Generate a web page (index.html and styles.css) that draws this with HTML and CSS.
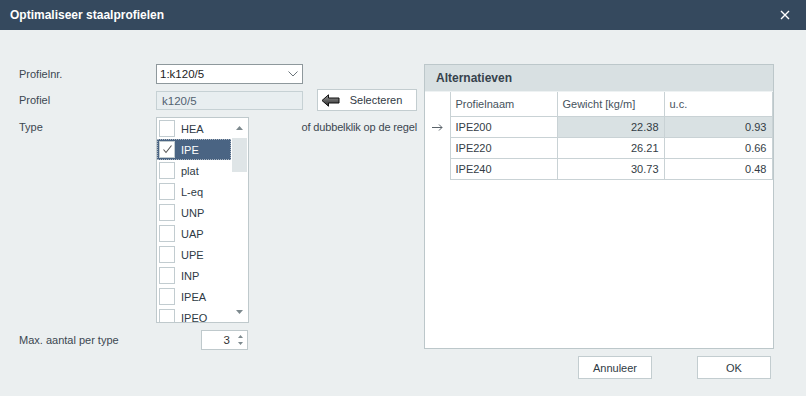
FILE: index.html
```html
<!DOCTYPE html>
<html>
<head>
<meta charset="utf-8">
<link rel="stylesheet" href="styles.css">
</head>
<body>
<div class="titlebar">
  <span class="title">Optimaliseer staalprofielen</span>
  <svg class="close" width="10" height="10" viewBox="0 0 10 10"><path d="M1 1 L9 9 M9 1 L1 9" stroke="#fff" stroke-width="1.4" fill="none"/></svg>
</div>
<div class="content">
  <div class="form">
    <div class="label">Profielnr.</div>
    <div class="combo"><span>1:k120/5</span>
      <svg width="10" height="6" viewBox="0 0 10 6"><path d="M0.5 0.5 L5 5 L9.5 0.5" stroke="#6a747a" fill="none"/></svg>
    </div>
    <div class="label">Profiel</div>
    <div class="readonly">k120/5</div>
    <div class="label label-top">Type</div>
    <div class="listbox">
      <div class="items">
        <div class="item"><span class="cb"></span>HEA</div>
        <div class="item selected"><span class="cb"><svg width="13" height="13" viewBox="0 0 13 13"><path d="M2.5 6.5 L5 9.5 L10.5 2.5" stroke="#555" stroke-width="1.1" fill="none"/></svg></span>IPE</div>
        <div class="item"><span class="cb"></span>plat</div>
        <div class="item"><span class="cb"></span>L-eq</div>
        <div class="item"><span class="cb"></span>UNP</div>
        <div class="item"><span class="cb"></span>UAP</div>
        <div class="item"><span class="cb"></span>UPE</div>
        <div class="item"><span class="cb"></span>INP</div>
        <div class="item"><span class="cb"></span>IPEA</div>
        <div class="item"><span class="cb"></span>IPEO</div>
      </div>
      <div class="scrollbar">
        <div class="sb-btn"><svg width="7" height="4" viewBox="0 0 7 4"><path d="M0 4 L3.5 0 L7 4 Z" fill="#7d898e"/></svg></div>
        <div class="sb-thumb"></div>
        <div class="sb-space"></div>
        <div class="sb-btn"><svg width="7" height="4" viewBox="0 0 7 4"><path d="M0 0 L3.5 4 L7 0 Z" fill="#7d898e"/></svg></div>
      </div>
    </div>
    <div class="label">Max. aantal per type</div>
    <div class="spinrow">
      <div class="spin"><span class="spin-val">3</span>
        <span class="spin-arrows">
          <svg width="5" height="3" viewBox="0 0 5 3"><path d="M0 3 L2.5 0 L5 3 Z" fill="#7d898e"/></svg>
          <svg width="5" height="3" viewBox="0 0 5 3"><path d="M0 0 L2.5 3 L5 0 Z" fill="#7d898e"/></svg>
        </span>
      </div>
    </div>
  </div>
  <div class="middle">
    <div class="btn select-btn">
      <svg width="19" height="13" viewBox="0 0 19 13"><defs><linearGradient id="g" x1="0" y1="0" x2="0" y2="1"><stop offset="0" stop-color="#9a9a9a"/><stop offset="1" stop-color="#2a2a2a"/></linearGradient></defs><path d="M1 6.5 L7.5 0.8 L7.5 4 L18 4 L18 9 L7.5 9 L7.5 12.2 Z" fill="url(#g)" stroke="#111" stroke-width="1"/></svg>
      <span class="btn-text">Selecteren</span>
    </div>
    <div class="hint">of dubbelklik op de regel</div>
  </div>
  <div class="right">
    <div class="panel">
      <div class="panel-head">Alternatieven</div>
      <table class="grid">
        <colgroup><col class="c-ind"><col class="c-name"><col class="c-w"><col class="c-uc"></colgroup>
        <tr class="hdr"><td class="ind"></td><td>Profielnaam</td><td>Gewicht [kg/m]</td><td>u.c.</td></tr>
        <tr class="cur"><td class="ind"><svg width="11" height="7" viewBox="0 0 11 7"><path d="M0 3.5 L10 3.5 M7 0.5 L10 3.5 L7 6.5" stroke="#5a636a" fill="none" stroke-width="1"/></svg></td><td>IPE200</td><td class="num">22.38</td><td class="num">0.93</td></tr>
        <tr><td class="ind"></td><td>IPE220</td><td class="num">26.21</td><td class="num">0.66</td></tr>
        <tr><td class="ind"></td><td>IPE240</td><td class="num">30.73</td><td class="num">0.48</td></tr>
      </table>
    </div>
    <div class="actions">
      <div class="btn act">Annuleer</div>
      <div class="btn act">OK</div>
    </div>
  </div>
</div>
</body>
</html>
```
FILE: styles.css
```css
html, body {
  margin: 0;
  padding: 0;
}
body {
  width: 806px;
  height: 396px;
  overflow: hidden;
  background: #ebeff0;
  font-family: "Liberation Sans", Arial, sans-serif;
  font-size: 11px;
  color: #3b4751;
}
.titlebar {
  height: 30px;
  background: #35495e;
  color: #fff;
  display: flex;
  align-items: center;
  justify-content: space-between;
  padding: 0 16px 0 10px;
}
.title {
  font-weight: bold;
  font-size: 12px;
}
.content {
  display: flex;
  padding: 34px 0 0 19px;
}
.form {
  display: grid;
  grid-template-columns: 137px 147px;
  grid-template-rows: 20px 19px 206px 20px;
  row-gap: 7px;
  align-items: center;
}
.label {
  line-height: 13px;
}
.label-top {
  align-self: start;
  padding-top: 4px;
}
.combo {
  height: 20px;
  box-sizing: border-box;
  border: 1px solid #8e989c;
  background: #fff;
  display: flex;
  align-items: center;
  justify-content: space-between;
  padding: 0 4px 0 3px;
  color: #1c1c1c;
  font-size: 11.5px;
}
.readonly {
  height: 19px;
  box-sizing: border-box;
  border: 1px solid #c6d1d4;
  background: #e8eef0;
  display: flex;
  align-items: center;
  padding-left: 5px;
  color: #536270;
  font-size: 11.5px;
}
.listbox {
  width: 93px;
  height: 206px;
  box-sizing: border-box;
  border: 1px solid #bfc9cc;
  background: #fff;
  display: flex;
  overflow: hidden;
}
.items {
  flex: 1;
  overflow: hidden;
}
.item {
  height: 21px;
  display: flex;
  align-items: center;
  color: #2e3a44;
}
.item .cb {
  width: 14px;
  height: 15px;
  border: 1px solid #c2ccd0;
  background: #fff;
  margin: 0 6px 0 2px;
  display: flex;
  align-items: center;
  justify-content: center;
}
.item.selected {
  background: #4a6483;
  color: #fff;
  outline: 1px dotted #a9b4c0;
  outline-offset: -1px;
}
.scrollbar {
  width: 17px;
  display: flex;
  flex-direction: column;
  background: #fff;
}
.sb-btn {
  height: 20px;
  display: flex;
  align-items: center;
  justify-content: center;
}
.sb-thumb {
  height: 34px;
  background: #dfe5e7;
  margin: 0 1px;
}
.sb-space {
  flex: 1;
}
.spinrow {
  display: flex;
}
.spin {
  margin-left: 45px;
  width: 47px;
  height: 20px;
  box-sizing: border-box;
  border: 1px solid #bfc9cc;
  background: #fff;
  display: flex;
  align-items: center;
  justify-content: flex-end;
  font-size: 11.5px;
  color: #333;
}
.spin-val {
  margin-right: 8px;
}
.spin-arrows {
  display: flex;
  flex-direction: column;
  gap: 4px;
  margin-right: 4px;
}
.spin-arrows svg {
  display: block;
}
.middle {
  width: 116px;
  margin-left: -2px;
  padding-top: 25px;
  display: flex;
  flex-direction: column;
  align-items: flex-end;
}
.btn {
  background: #fff;
  border: 1px solid #c3cdd0;
  box-sizing: border-box;
  color: #2f3a44;
  font-size: 11px;
}
.select-btn {
  width: 100px;
  height: 22px;
  display: flex;
  align-items: center;
  padding-left: 3px;
}
.btn-text {
  flex: 1;
  text-align: center;
  padding-right: 4px;
}
.hint {
  margin-top: 10px;
  line-height: 13px;
  white-space: nowrap;
  letter-spacing: -0.15px;
}
.right {
  margin-left: 7px;
  display: flex;
  flex-direction: column;
}
.panel {
  width: 350px;
  height: 285px;
  box-sizing: border-box;
  border: 1px solid #bcc7ca;
  background: #fff;
}
.panel-head {
  height: 26px;
  background: #d8e0e2;
  border-bottom: 1px solid #eef2f3;
  font-weight: bold;
  font-size: 12px;
  display: flex;
  align-items: center;
  padding-left: 11px;
  color: #36424c;
}
.grid {
  border-collapse: collapse;
  width: 347px;
  table-layout: fixed;
  color: #333c45;
  font-size: 11px;
}
.grid .c-ind { width: 25px; }
.grid .c-name { width: 107px; }
.grid .c-w { width: 107px; }
.grid .c-uc { width: 108px; }
.grid td {
  height: 20px;
  padding: 0 5px;
  border: 1px solid #c9d2d5;
  border-top: none;
  border-left: none;
  white-space: nowrap;
}
.grid .hdr td {
  height: 24px;
  color: #46525c;
}
.grid td.ind {
  border-bottom: none;
  text-align: center;
  padding: 0;
}
.grid td.ind svg {
  display: block;
  margin: 0 auto;
}
.grid .num {
  text-align: right;
}
.grid .cur .num {
  background: #d9e1e3;
}
.actions {
  display: flex;
  justify-content: flex-end;
  gap: 45px;
  margin-top: 7px;
  margin-right: 3px;
}
.act {
  width: 74px;
  height: 23px;
  display: flex;
  align-items: center;
  justify-content: center;
}
```
